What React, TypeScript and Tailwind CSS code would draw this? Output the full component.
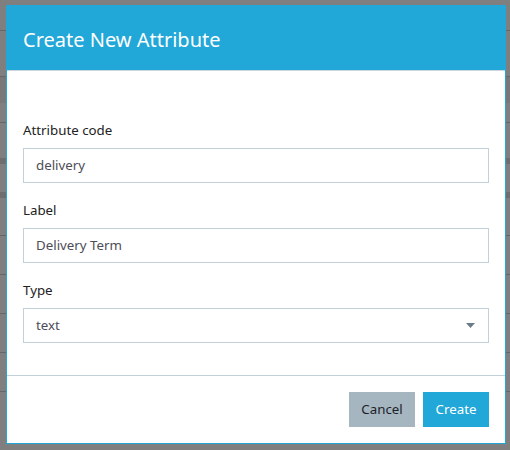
import React from "react";

const font = { fontFamily: '"Noto Sans", "Open Sans", sans-serif' };

export default function App() {
  return (
    <div className="relative w-[510px] h-[450px] overflow-hidden bg-[#7f7f7f]" style={font}>
      {/* background page (dimmed table) */}
      <div className="flex flex-col">
        <div className="h-[31px] border-b border-[#60686d]" />
        <div className="h-[45px]" />
        <div className="h-[27px] bg-[#787878] border-t border-[#60686d]" />
        <div className="h-[20px] border-b border-[#60686d]" />
        <div className="h-[41px] border-b-[6px] border-[#6e6e6e]" />
        <div className="h-[34px] border-b-[6px] border-[#6e6e6e]" />
        <div className="h-[38px] border-b border-[#60686d]" />
        <div className="h-[39px] border-b border-[#60686d]" />
        <div className="h-[39px] border-b border-[#60686d]" />
        <div className="h-[39px] border-b border-[#60686d]" />
        <div className="h-[39px] border-b border-[#60686d]" />
        <div className="h-[40px] flex">
          <div className="w-[382px] border-r border-[#60686d]" />
        </div>
      </div>

      {/* modal */}
      <div className="absolute left-[6px] top-[5px] w-[500px] h-[439px] bg-white border border-[#21a7d8] flex flex-col">
        <div className="h-[64px] bg-[#21a7d8] flex items-center px-[16px] border-b border-[#c9d6dd] box-content">
          <h1 className="text-white text-[20px] leading-[28px] pt-[3px]">Create New Attribute</h1>
        </div>
        <div className="flex flex-col px-[16px] pt-[49px]">
          <label className="text-[13.3px] leading-[20px] text-[#222]">Attribute code</label>
          <div className="mt-[8px] h-[35px] border border-[#c2d0d8] flex items-center px-[12px] text-[13.3px] text-[#4d4d57]">
            delivery
          </div>
          <label className="mt-[17px] text-[13.3px] leading-[20px] text-[#222]">Label</label>
          <div className="mt-[8px] h-[35px] border border-[#c2d0d8] flex items-center px-[12px] text-[13.3px] text-[#4d4d57]">
            Delivery Term
          </div>
          <label className="mt-[17px] text-[13.3px] leading-[20px] text-[#222]">Type</label>
          <div className="mt-[8px] h-[35px] border border-[#c2d0d8] flex items-center justify-between px-[12px] text-[13.3px] text-[#4d4d57]">
            <span>text</span>
            <svg width="9" height="5" viewBox="0 0 9 5" className="mr-[1px]">
              <path d="M0 0 L9 0 L4.5 5 Z" fill="#6b7c86" />
            </svg>
          </div>
        </div>
        <div className="mt-[32px] border-t border-[#c2d0d8] flex justify-end gap-[8px] px-[16px] pt-[16px]">
          <button className="h-[35px] w-[66px] bg-[#a5b6c0] text-[#1e1e28] text-[13.3px]">Cancel</button>
          <button className="h-[35px] w-[66px] bg-[#21a7d8] text-white text-[13.3px]">Create</button>
        </div>
      </div>
    </div>
  );
}
